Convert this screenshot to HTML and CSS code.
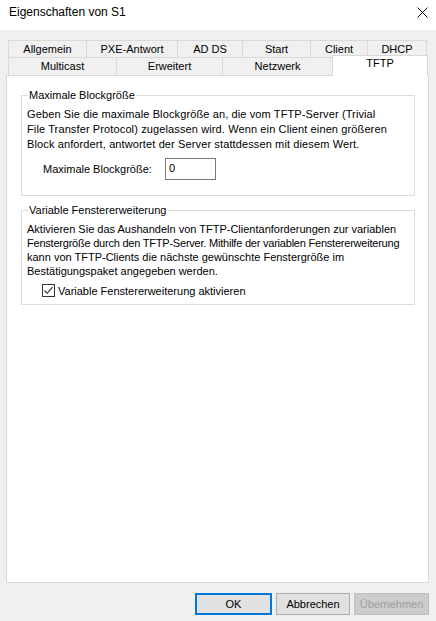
FILE: index.html
```html
<!DOCTYPE html>
<html lang="de">
<head>
<meta charset="utf-8">
<title>Eigenschaften von S1</title>
<link rel="stylesheet" href="styles.css">
</head>
<body>
<div class="window">
  <div class="titlebar">
    <span class="title">Eigenschaften von S1</span>
    <svg class="close" width="11" height="11" viewBox="0 0 11 11"><path d="M0.5 0.5 L10.5 10.5 M10.5 0.5 L0.5 10.5" stroke="#111" stroke-width="1" fill="none"/></svg>
  </div>
  <div class="content">
    <div class="tabs">
      <div class="tabrow row1">
        <div class="tab w-allg">Allgemein</div>
        <div class="tab w-pxe">PXE-Antwort</div>
        <div class="tab w-adds">AD DS</div>
        <div class="tab w-start">Start</div>
        <div class="tab w-client">Client</div>
        <div class="tab w-dhcp last">DHCP</div>
      </div>
      <div class="tabrow row2">
        <div class="tab w-multi">Multicast</div>
        <div class="tab w-erw">Erweitert</div>
        <div class="tab w-netz">Netzwerk</div>
        <div class="tab w-tftp selected">TFTP</div>
      </div>
    </div>
    <div class="panel">
      <fieldset class="group g1">
        <legend>Maximale Blockgröße</legend>
        <p class="desc">Geben Sie die maximale Blockgröße an, die vom TFTP-Server (Trivial<br>File Transfer Protocol) zugelassen wird. Wenn ein Client einen größeren<br>Block anfordert, antwortet der Server stattdessen mit diesem Wert.</p>
        <div class="field">
          <label class="flabel">Maximale Blockgröße:</label>
          <div class="input">0</div>
        </div>
      </fieldset>
      <fieldset class="group g2">
        <legend>Variable Fenstererweiterung</legend>
        <p class="desc d2">Aktivieren Sie das Aushandeln von TFTP-Clientanforderungen zur variablen<br><span class="tight">Fenstergröße durch den TFTP-Server. Mithilfe der variablen Fenstererweiterung</span><br>kann von TFTP-Clients die nächste gewünschte Fenstergröße im<br>Bestätigungspaket angegeben werden.</p>
        <div class="check">
          <span class="box"><svg width="11" height="11" viewBox="0 0 11 11"><path d="M1.5 5.5 L4.2 8.3 L9.6 2.2" stroke="#222" stroke-width="1.1" fill="none"/></svg></span>
          <span>Variable Fenstererweiterung aktivieren</span>
        </div>
      </fieldset>
    </div>
    <div class="buttons">
      <div class="btn default">OK</div>
      <div class="btn cancel">Abbrechen</div>
      <div class="btn disabled">Übernehmen</div>
    </div>
  </div>
</div>
</body>
</html>
```
FILE: styles.css
```css
* { box-sizing: border-box; }
html, body { margin: 0; padding: 0; }
body {
  font-family: "Liberation Sans", Arial, sans-serif;
  font-size: 11px;
  color: #000;
  background: #f0f0f0;
}
.window {
  width: 436px;
  height: 621px;
  background: #f0f0f0;
  display: flex;
  flex-direction: column;
}
.titlebar {
  height: 30px;
  background: #fff;
  display: flex;
  align-items: flex-start;
  justify-content: space-between;
  padding: 5px 8px 0 9px;
}
.title { font-size: 12px; color: #000; line-height: 14px; }
.close { display: block; margin-top: 2px; }
.content {
  padding: 10px 7px 0 6px;
  display: flex;
  flex-direction: column;
  flex: 1;
}
.tabs { margin: 0 0 0 2px; }
.tabrow { display: flex; }
.row1 { height: 17px; }
.row2 { height: 18px; }
.tab {
  border: 1px solid #d9d9d9;
  border-right: none;
  border-bottom: none;
  background: #f0f0f0;
  text-align: center;
  line-height: 16px;
}
.tab.last { border-right: 1px solid #d9d9d9; }
.row2 .tab { line-height: 17px; }
.w-allg { width: 78px; }
.w-pxe { width: 91px; }
.w-adds { width: 65px; }
.w-start { width: 68px; }
.w-client { width: 57px; }
.w-dhcp { width: 60px; }
.w-multi { width: 108px; }
.w-erw { width: 106px; }
.w-netz { width: 110px; }
.w-tftp { width: 96px; }
.row2 .tab.selected {
  background: #fff;
  border-right: 1px solid #d9d9d9;
  height: 21px;
  margin-top: -2px;
  margin-bottom: -1px;
  position: relative;
  z-index: 1;
  line-height: 15px;
}
.panel {
  background: #fff;
  border: 1px solid #d9d9d9;
  height: 508px;
  padding: 13px 13px 0 14px;
}
.group {
  border: 1px solid #dcdcdc;
  margin: 0;
  padding: 0 5px;
  min-width: 0;
}
.group legend {
  padding: 0 1px;
  margin-left: 1px;
  line-height: 13px;
}
.desc {
  margin: 5px 0 0 0;
  line-height: 15px;
  white-space: nowrap;
  letter-spacing: 0.12px;
}
.d2 { line-height: 14px; margin-top: 5px; letter-spacing: 0; }
.tight { letter-spacing: -0.22px; }
.field {
  display: flex;
  align-items: center;
  margin: 6px 0 15px 16px;
}
.flabel { width: 122px; }
.input {
  width: 51px;
  height: 22px;
  border: 1px solid #7a7a7a;
  padding: 2px 0 0 3px;
  line-height: 14px;
  background: #fff;
}
.g2 { margin-top: 8px; }
.check {
  display: flex;
  align-items: center;
  margin: 6px 0 7px 15px;
  gap: 3px;
}
.box {
  width: 13px;
  height: 13px;
  border: 1px solid #333;
  display: flex;
  align-items: center;
  justify-content: center;
  background: #fff;
}
.box svg { display: block; }
.buttons {
  display: flex;
  justify-content: flex-end;
  gap: 4px;
  margin-top: 10px;
  margin-right: 0;
}
.btn {
  width: 75px;
  height: 22px;
  border: 1px solid #adadad;
  background: #e1e1e1;
  text-align: center;
  line-height: 20px;
}
.btn.cancel { width: 74px; }
.btn.default { border: 2px solid #0078d7; line-height: 18px; width: 77px; }
.btn.disabled { color: #a0a0a0; background: #cccccc; border-color: #bfbfbf; width: 75px; }
```
